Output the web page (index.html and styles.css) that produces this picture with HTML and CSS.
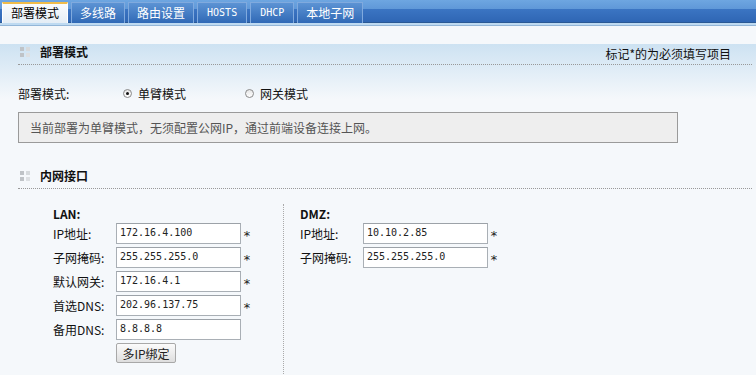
FILE: index.html
```html
<!DOCTYPE html>
<html lang="zh-CN">

<head>
    <meta charset="UTF-8">
    <title>部署模式</title>
    <link rel="stylesheet" href="styles.css">
</head>

<body>
    <div class="tabbar">
        <div class="tab active">部署模式</div>
        <div class="tab">多线路</div>
        <div class="tab">路由设置</div>
        <div class="tab mono">HOSTS</div>
        <div class="tab mono">DHCP</div>
        <div class="tab">本地子网</div>
    </div>
    <div class="tabbar-strip"></div>

    <div class="page">
        <div class="sec-head">
            <span class="dots"><i></i><i></i><i></i><i></i></span>
            <h3>部署模式</h3>
            <span class="note">标记*的为必须填写项目</span>
        </div>

        <div class="mode-row">
            <span class="mode-label">部署模式:</span>
            <label class="radio-opt"><input type="radio" name="mode" checked>单臂模式</label>
            <label class="radio-opt"><input type="radio" name="mode">网关模式</label>
        </div>

        <div class="notice">当前部署为单臂模式，无须配置公网IP，通过前端设备连接上网。</div>

        <div class="sec-head second">
            <span class="dots"><i></i><i></i><i></i><i></i></span>
            <h3>内网接口</h3>
        </div>

        <div class="iface">
            <div class="col lan">
                <div class="col-title">LAN:</div>
                <div class="field">
                    <label>IP地址:</label>
                    <input type="text" value="172.16.4.100"><span class="req">*</span>
                </div>
                <div class="field">
                    <label>子网掩码:</label>
                    <input type="text" value="255.255.255.0"><span class="req">*</span>
                </div>
                <div class="field">
                    <label>默认网关:</label>
                    <input type="text" value="172.16.4.1"><span class="req">*</span>
                </div>
                <div class="field">
                    <label>首选DNS:</label>
                    <input type="text" value="202.96.137.75"><span class="req">*</span>
                </div>
                <div class="field">
                    <label>备用DNS:</label>
                    <input type="text" value="8.8.8.8">
                </div>
                <button class="btn">多IP绑定</button>
            </div>
            <div class="col dmz">
                <div class="col-title">DMZ:</div>
                <div class="field">
                    <label>IP地址:</label>
                    <input type="text" value="10.10.2.85"><span class="req">*</span>
                </div>
                <div class="field">
                    <label>子网掩码:</label>
                    <input type="text" value="255.255.255.0"><span class="req">*</span>
                </div>
            </div>
        </div>
    </div>
</body>

</html>
```

FILE: styles.css
```css
body {
    margin: 0;
    overflow: hidden;
    font-family: "Noto Sans CJK SC", sans-serif;
    font-size: 12px;
    color: #111;
    background: #f5f8fb;
}

/* верхняя полоса вкладок */
.tabbar {
    display: flex;
    align-items: flex-end;
    gap: 3px;
    height: 23px;
    padding-left: 2px;
    box-sizing: border-box;
    background: linear-gradient(#6ea6e1 0, #5f98d8 9px, #3b75c3 9px, #2f66b4 22px, #2a5995 22px);
}

.tab {
    height: 21px;
    box-sizing: border-box;
    padding: 0 8px;
    line-height: 19px;
    color: #fff;
    border: 1px solid #80aade;
    border-bottom: none;
    background: linear-gradient(#5c93d4, #3069b6);
    white-space: nowrap;
}

.tab.active {
    color: #000;
    border-color: #ffffff;
    border-top: 2px solid #f0bc4a;
    line-height: 18px;
    background: linear-gradient(#fafcfd, #e4edf5);
}

.tab.mono {
    padding: 0 9px;
    font-family: "DejaVu Sans Mono", monospace;
    font-size: 10px;
}

.tabbar-strip {
    height: 3px;
    background: linear-gradient(#bedaf1 0, #bedaf1 2px, #93b6d8 2px);
}

.page {
    min-height: 349px;
    padding: 0 4px 0 18px;
    box-sizing: border-box;
    background: linear-gradient(#cde2f2, #f5f8fb 55px) no-repeat;
}

.sec-head {
    display: flex;
    align-items: center;
    height: 16px;
    margin-top: 18px;
    padding-bottom: 4px;
    border-bottom: 1px dotted #999;
}

.sec-head.second {
    margin-top: 25px;
}

/* значок из четырёх квадратиков */
.dots {
    display: grid;
    grid-template-columns: 4px 4px;
    gap: 2px;
    flex: none;
    margin: 0 10px 0 2px;
}

.dots i {
    width: 4px;
    height: 4px;
    background: #bfc3c7;
}

.dots i:nth-child(2) {
    background: #d6dadd;
}

.dots i:nth-child(4) {
    background: #dde0e3;
}

.sec-head h3 {
    margin: 0;
    font-size: 12px;
    font-weight: bold;
    line-height: 16px;
}

.note {
    margin-left: auto;
    margin-right: 21px;
    margin-top: 3px;
}

.mode-row {
    display: flex;
    align-items: center;
    height: 16px;
    margin-top: 20px;
}

.mode-label {
    width: 105px;
}

.radio-opt {
    display: flex;
    align-items: center;
    gap: 6px;
    width: 122px;
}

.radio-opt input {
    appearance: none;
    width: 9px;
    height: 9px;
    margin: 0;
    border: 1px solid #8a8a8a;
    border-radius: 50%;
    box-sizing: border-box;
    background: linear-gradient(#e6e6e6, #fff);
    position: relative;
}

.radio-opt input:checked::after {
    content: "";
    position: absolute;
    left: 2px;
    top: 2px;
    width: 3px;
    height: 3px;
    border-radius: 50%;
    background: #111;
}

.notice {
    width: 660px;
    height: 31px;
    margin-top: 11px;
    padding: 0 11px;
    box-sizing: border-box;
    line-height: 29px;
    color: #555;
    background: #eeeeee;
    border: 1px solid #9a9a9a;
}

.iface {
    display: flex;
    min-height: 172px;
    margin: 15px 0 0 35px;
}

.col.lan {
    width: 230px;
}

.col.dmz {
    padding-left: 16px;
    border-left: 1px dotted #aaa;
}

.col-title {
    padding-top: 3px;
    margin-bottom: 2px;
    line-height: 14px;
    font-weight: bold;
}

.field {
    display: flex;
    align-items: center;
    height: 21px;
    margin-bottom: 3px;
}

.field label {
    width: 63px;
}

.field input {
    width: 125px;
    height: 21px;
    margin: 0;
    padding: 0 3px 3px;
    box-sizing: border-box;
    border: 1px solid #a9afb5;
    border-top-color: #9ca2a8;
    background: #fff;
    font-family: "DejaVu Sans Mono", monospace;
    font-size: 10px;
    color: #222;
}

.req {
    margin-left: 2px;
    padding-top: 3px;
    font-family: "DejaVu Sans Mono", monospace;
    font-size: 13px;
    line-height: 13px;
    color: #222;
}

.btn {
    width: 60px;
    height: 20px;
    margin-left: 63px;
    padding: 0;
    border: 1px solid #a8a8a8;
    border-radius: 2px;
    background: linear-gradient(#fbfbfb, #dedede);
    font-family: "Noto Sans CJK SC", sans-serif;
    font-size: 12px;
    color: #222;
}
```
